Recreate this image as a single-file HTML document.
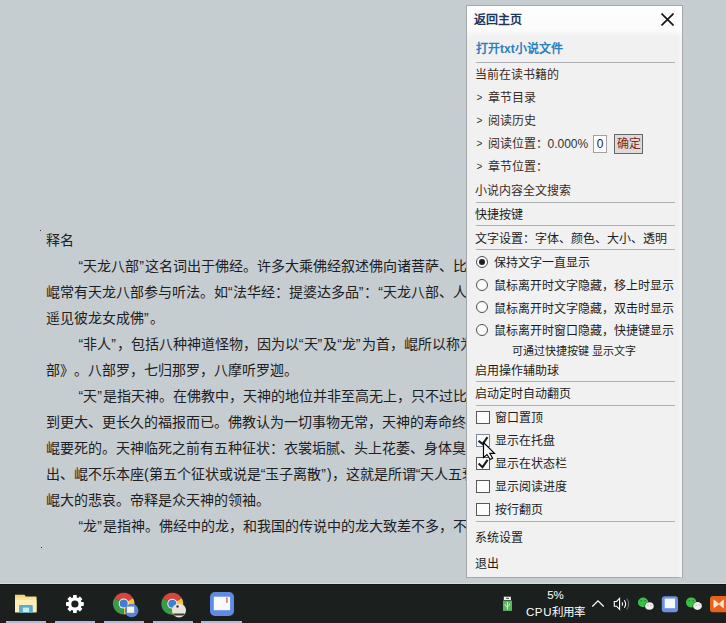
<!DOCTYPE html>
<html lang="zh-CN"><head><meta charset="utf-8">
<style>
*{margin:0;padding:0;box-sizing:border-box}
html,body{text-spacing-trim:space-all;width:726px;height:623px;overflow:hidden;background:#c6cdd0;font-family:"Liberation Sans",sans-serif;position:relative}
.txt{position:absolute;left:46px;top:0;width:440px;font-size:14px;color:#1c2022;white-space:nowrap}
.txt div{position:absolute;left:0;height:26px;line-height:26px}
.dot{position:absolute;width:1px;height:1px;background:#333}
#panel{position:absolute;left:466px;top:5px;width:217px;height:573px;background:#f1f1f1;border:1px solid #a3a9ab}
.it{position:absolute;left:8px;font-size:12px;line-height:16px;white-space:nowrap;color:#1c1c1c}
.sep{position:absolute;left:9px;width:199px;height:1px;background:#aeb0b4}
.inp{position:absolute;left:126px;top:129px;width:14px;height:18px;border:1px solid #a0a0a0;background:#fff;font-size:12px;line-height:16px;text-align:center;color:#222}
.btn{position:absolute;left:147px;top:128px;width:29px;height:20px;border:1px solid #666;background:#dfdada;font-size:12px;line-height:18px;text-align:center;color:#7a2a20}
.rad{position:absolute;left:9px;width:12px;height:12px;border:1px solid #505050;border-radius:50%;background:#fbfbfb}
.rad.on::after{content:"";position:absolute;left:2px;top:2px;width:6px;height:6px;border-radius:50%;background:#1e1e1e}
.chk{position:absolute;left:9px;width:14px;height:13px;border:1px solid #585858;background:#fcfcfc}
.chk.hov{border-color:#7d8896}

.gt{display:inline-block;width:12.5px;font-size:10px;padding-left:1.5px;vertical-align:top;line-height:16px;color:#333}
.cq{font-weight:normal;margin-right:1px}
#taskbar{position:absolute;left:0;top:584px;width:726px;height:39px;background:#1b201f;border-top:1px solid #101615}
</style></head><body>
<div class="txt">
<div style="top:227px">释名</div>
<div style="top:253px"><span style="display:inline-block;width:32.5px"></span>“天龙八部<b class="cq">”</b>这名词出于佛经。许多大乘佛经叙述佛向诸菩萨、比丘</div>
<div style="top:279px">崐常有天龙八部参与听法。如“法华经：提婆达多品<b class="cq">”</b>：“天龙八部、人与</div>
<div style="top:305px">遥见彼龙女成佛<b class="cq">”</b>。</div>
<div style="top:331px"><span style="display:inline-block;width:32.5px"></span>“非人<b class="cq">”</b>，包括八种神道怪物，因为以“天<b class="cq">”</b>及“龙<b class="cq">”</b>为首，崐所以称为</div>
<div style="top:357px">部》。八部罗，七归那罗，八摩听罗迦。</div>
<div style="top:383px"><span style="display:inline-block;width:32.5px"></span>“天<b class="cq">”</b>是指天神。在佛教中，天神的地位并非至高无上，只不过比人</div>
<div style="top:409px">到更大、更长久的福报而已。佛教认为一切事物无常，天神的寿命终</div>
<div style="top:435px">崐要死的。天神临死之前有五种征状：衣裳垢腻、头上花萎、身体臭</div>
<div style="top:461px">出、崐不乐本座(第五个征状或说是“玉子离散<b class="cq">”</b>)，这就是所谓“天人五衰</div>
<div style="top:487px">崐大的悲哀。帝释是众天神的领袖。</div>
<div style="top:513px"><span style="display:inline-block;width:32.5px"></span>“龙<b class="cq">”</b>是指神。佛经中的龙，和我国的传说中的龙大致差不多，不</div>
</div>
<div class="dot" style="left:40px;top:230px"></div>
<div class="dot" style="left:41px;top:547px"></div>

<div id="panel">
<div style="position:absolute;left:0;top:0;width:215px;height:31px;background:linear-gradient(#fdfdfd 0,#fcfcfc 23px,#f1f1f1 31px)"></div>
<div style="position:absolute;right:0;top:0;width:4px;height:572px;background:linear-gradient(90deg,rgba(255,255,255,0),rgba(255,255,255,0.5))"></div>
<div class="it" style="top:6px;left:7px;font-weight:bold;color:#1f3760">返回主页</div>
<svg style="position:absolute;left:194px;top:7px" width="13" height="13" viewBox="0 0 13 13"><path d="M0.5 0.5L12.5 12.5M12.5 0.5L0.5 12.5" stroke="#111" stroke-width="1.6"/></svg>
<div class="it" style="top:35px;left:9px;font-weight:bold;color:#2a7fc0">打开txt小说文件</div>
<div class="sep" style="top:56px"></div>
<div class="it" style="top:61px;color:#3d2a20">当前在读书籍的</div>
<div class="it" style="top:84px;color:#3d2a20"><span class="gt">&gt;</span>章节目录</div>
<div class="it" style="top:107px;color:#3d2a20"><span class="gt">&gt;</span>阅读历史</div>
<div class="it" style="top:130px;color:#3d2a20"><span class="gt">&gt;</span>阅读位置：<span style="color:#333">0.000%</span></div>
<div class="inp">0</div>
<div class="btn">确定</div>
<div class="it" style="top:153px;color:#3d2a20"><span class="gt">&gt;</span>章节位置：</div>
<div class="it" style="top:177px;color:#3d2a20">小说内容全文搜索</div>
<div class="sep" style="top:196px"></div>
<div class="it" style="top:201px">快捷按键</div>
<div class="sep" style="top:219px"></div>
<div class="it" style="top:225px">文字设置：字体、颜色、大小、透明</div>
<div class="sep" style="top:243px"></div>
<div class="rad on" style="top:250px"></div><div class="it" style="top:249px;left:27px">保持文字一直显示</div>
<div class="rad" style="top:273px"></div><div class="it" style="top:272px;left:27px">鼠标离开时文字隐藏，移上时显示</div>
<div class="rad" style="top:295px"></div><div class="it" style="top:295px;left:27px">鼠标离开时文字隐藏，双击时显示</div>
<div class="rad" style="top:318px"></div><div class="it" style="top:317px;left:27px">鼠标离开时窗口隐藏，快捷键显示</div>
<div class="it" style="top:337px;left:45px;font-size:11px">可通过快捷按键 显示文字</div>
<div class="it" style="top:357px">启用操作辅助球</div>
<div class="sep" style="top:375px"></div>
<div class="it" style="top:380px">启动定时自动翻页</div>
<div class="sep" style="top:399px"></div>
<div class="chk" style="top:405px"></div><div class="it" style="top:404px;left:28px">窗口置顶</div>
<div class="chk on hov" style="top:428px"></div><div class="it" style="top:427px;left:28px">显示在托盘</div>
<div class="chk on" style="top:451px"></div><div class="it" style="top:450px;left:28px">显示在状态栏</div>
<div class="chk" style="top:474px"></div><div class="it" style="top:473px;left:28px">显示阅读进度</div>
<div class="chk" style="top:497px"></div><div class="it" style="top:496px;left:28px">按行翻页</div>
<div class="sep" style="top:515px"></div>
<div class="it" style="top:524px">系统设置</div>
<div class="it" style="top:550px">退出</div>
</div>
<svg style="position:absolute;left:0;top:0" width="726" height="623">
<path d="M478.6 440.8L482.7 444L487.5 437.2" fill="none" stroke="#1c1c1c" stroke-width="2.1"/>
<path d="M478.6 463.6L482.5 467.2L487.6 459.8" fill="none" stroke="#1c1c1c" stroke-width="2.1"/>
<path d="M483.5 442.5V457.5L487 454.5L490.2 459.5L492.6 458.3L489.8 453.4H494.5Z" fill="#fff" stroke="#000" stroke-width="1.15" stroke-linejoin="miter"/>
</svg>
<div id="taskbar"></div>
<div style="position:absolute;left:0;top:583px;width:726px;height:1px;background:#d6dcdb"></div>
<svg style="position:absolute;left:0;top:0" width="726" height="623">
<!-- indicator bars -->
<g fill="#9cc0e4"><rect x="6" y="621" width="40" height="2"/><rect x="55" y="621" width="40" height="2"/><rect x="104" y="621" width="40" height="2"/><rect x="153" y="621" width="40" height="2"/><rect x="201" y="621" width="41" height="2"/></g>
<!-- folder -->
<path d="M15 594.7H24.5L25.8 596.5H36.4V612.2H15Z" fill="#f2d676"/>
<rect x="15" y="597.5" width="21.4" height="14.7" fill="#f8e49a"/>
<rect x="15" y="600" width="21.4" height="12.2" fill="#fbeeb8"/>
<rect x="19" y="604.9" width="13.8" height="7.8" rx="1" fill="#5aaccd"/>
<rect x="22.9" y="607.6" width="6.2" height="4.4" fill="#c4eee6"/>
<!-- gear -->
<g transform="translate(74.9 604)">
<g fill="#fff">
<circle r="6.8"/>
<rect x="-1.9" y="-8.9" width="3.8" height="17.8" rx="0.6"/>
<rect x="-1.9" y="-8.9" width="3.8" height="17.8" rx="0.6" transform="rotate(45)"/>
<rect x="-1.9" y="-8.9" width="3.8" height="17.8" rx="0.6" transform="rotate(90)"/>
<rect x="-1.9" y="-8.9" width="3.8" height="17.8" rx="0.6" transform="rotate(135)"/>
</g>
<circle r="3.6" fill="#1b201f"/>
</g>
<!-- chrome 1 -->
<g transform="translate(123.7 603.6)">
<path d="M0 0L-9.35 -5.4A10.8 10.8 0 0 1 9.35 -5.4Z" fill="#d9453a"/>
<path d="M0 0L9.35 -5.4A10.8 10.8 0 0 1 0 10.8Z" fill="#f2c43a"/>
<path d="M0 0L0 10.8A10.8 10.8 0 0 1 -9.35 -5.4Z" fill="#3c9a4c"/>
<circle r="5" fill="#f4f4f4"/><circle r="4" fill="#3d7fd4"/>
</g>
<circle cx="131.6" cy="610.5" r="6.8" fill="#5b82d6"/>
<rect x="127" y="606.6" width="7.2" height="6.2" fill="#f4f2e8"/>
<!-- chrome 2 -->
<g transform="translate(172.3 603.7)">
<path d="M0 0L-9.5 -5.5A11 11 0 0 1 9.5 -5.5Z" fill="#d9453a"/>
<path d="M0 0L9.5 -5.5A11 11 0 0 1 0 11Z" fill="#f2c43a"/>
<path d="M0 0L0 11A11 11 0 0 1 -9.5 -5.5Z" fill="#3c9a4c"/>
<circle r="5" fill="#f4f4f4"/><circle r="4" fill="#3d7fd4"/>
</g>
<circle cx="179" cy="610.5" r="7" fill="#e8e4d8"/>
<rect x="173.5" y="613.5" width="11" height="2" fill="#3a3a38"/>
<circle cx="177.5" cy="606.5" r="1.2" fill="#503050"/>
<!-- app icon -->
<rect x="210" y="592" width="24" height="24" rx="5" fill="#5f8be4"/>
<rect x="213.8" y="596.7" width="16.3" height="13.5" fill="#f6f9ff"/>
<rect x="226.2" y="597.3" width="1.4" height="5.6" fill="#d07050"/>
<!-- usb -->
<rect x="503.8" y="596.7" width="7.1" height="3.3" fill="#f2f2f2"/>
<rect x="506" y="597.8" width="3" height="1" fill="#444"/>
<rect x="503" y="600.6" width="9" height="10.3" fill="#5cb860"/>
<path d="M507.5 602V609.5M507.5 607.5L505.3 605.5V604M507.5 606.5L509.6 605V603.5" stroke="#d8f5d8" stroke-width="0.9" fill="none"/>
<!-- chevron -->
<path d="M592.3 606.5L598 600.8L603.7 606.5" stroke="#fff" stroke-width="1.2" fill="none"/>
<!-- speaker -->
<path d="M614.3 601.5H616.6L619.6 598.3V609.4L616.6 606.2H614.3Z" stroke="#fff" stroke-width="1.1" fill="none"/>
<path d="M622 602.3Q623.3 604 622 605.7" stroke="#fff" stroke-width="1.1" fill="none"/>
<path d="M624.3 600.3Q627 604 624.3 607.7" stroke="#fff" stroke-width="1.1" fill="none"/>
<path d="M626.8 598.5Q630.6 604 626.8 609.5" stroke="#7a7a7a" stroke-width="1" fill="none"/>
<!-- wechat 1 -->
<ellipse cx="643.1" cy="602.4" rx="5.1" ry="4.9" fill="#3cbf48"/>
<ellipse cx="649.4" cy="606" rx="4.8" ry="4.1" fill="#1b201f"/>
<ellipse cx="649.4" cy="606" rx="4.3" ry="3.8" fill="#eef0ea"/><circle cx="641.3" cy="600.8" r="0.8" fill="#1f7a2a"/><circle cx="645" cy="600.8" r="0.8" fill="#1f7a2a"/><circle cx="648" cy="605" r="0.6" fill="#8a8a8a"/><circle cx="651" cy="605" r="0.6" fill="#8a8a8a"/>
<!-- blue app systray -->
<rect x="661.8" y="596.3" width="16.2" height="15.9" rx="3" fill="#6f8fe0"/>
<rect x="664.7" y="598.6" width="10.3" height="9.6" fill="#f4f8ff"/>
<!-- wechat 2 -->
<ellipse cx="691.2" cy="602.4" rx="5.2" ry="5" fill="#3cbf48"/>
<ellipse cx="697.5" cy="606" rx="4.9" ry="4.2" fill="#1b201f"/>
<ellipse cx="697.5" cy="606" rx="4.4" ry="3.9" fill="#eef0ea"/><circle cx="689.4" cy="600.8" r="0.8" fill="#1f7a2a"/><circle cx="693.1" cy="600.8" r="0.8" fill="#1f7a2a"/><circle cx="696.1" cy="605" r="0.6" fill="#8a8a8a"/><circle cx="699.1" cy="605" r="0.6" fill="#8a8a8a"/>
<!-- orange -->
<rect x="710" y="596" width="20" height="16.3" rx="3" fill="#e8621a"/>
<path d="M713.5 599.3L719.6 604L713.5 608.4Z M723.8 599.3L718.4 604L723.8 608.4Z" fill="#fbe6d8"/>
</svg>
<div style="position:absolute;left:539px;top:587.5px;width:33px;text-align:center;color:#fff;font-size:11.5px;line-height:14px">5%</div>
<div style="position:absolute;left:520.5px;top:604.5px;width:70px;text-align:center;color:#fff;font-size:11.5px;line-height:15px"><span style="letter-spacing:0.6px">CPU</span>利用率</div>

</body></html>
